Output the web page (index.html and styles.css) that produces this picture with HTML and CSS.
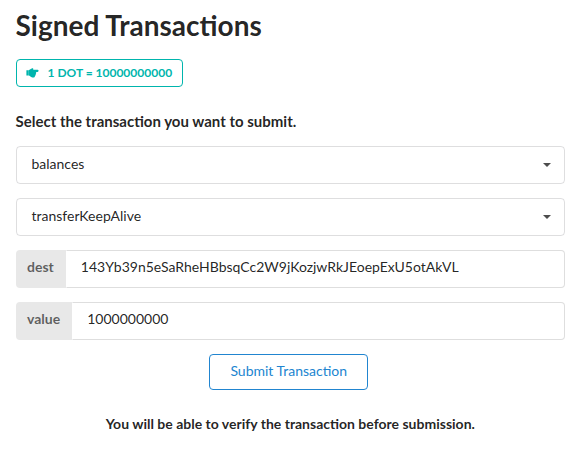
FILE: index.html
```html
<!DOCTYPE html>
<html lang="en">
<head>
<meta charset="utf-8">
<title>Signed Transactions</title>
<link rel="stylesheet" href="styles.css">
</head>
<body>
<main class="page">
  <h1 class="title">Signed Transactions</h1>
  <div class="label">
    <svg class="hand" viewBox="0 0 13 12"><path d="M.4 3.2h2v5.2h-2zM2.6 3.2C4 3 4.7 1.6 6.2 1.3c1-.1 1.3.6 1 1.4h4.4c1.3 0 1.3 2.2 0 2.2H10c.4.5.3 1.1-.1 1.5.2.5.1 1-.4 1.4.1.6-.1 1.1-.6 1.4 0 .9-.7 1.3-1.6 1.3H6.2C4.8 10.2 4 8.7 2.6 8.5z"/></svg>
    <span>1 DOT = 10000000000</span>
  </div>
  <p class="lead">Select the transaction you want to submit.</p>
  <div class="dropdown"><span>balances</span><i class="caret"></i></div>
  <div class="dropdown"><span>transferKeepAlive</span><i class="caret"></i></div>
  <div class="field"><span class="name">dest</span><span class="input">143Yb39n5eSaRheHBbsqCc2W9jKozjwRkJEoepExU5otAkVL</span></div>
  <div class="field"><span class="name">value</span><span class="input">1000000000</span></div>
  <button class="submit" type="button">Submit Transaction</button>
  <p class="note">You will be able to verify the transaction before submission.</p>
</main>
</body>
</html>
```
FILE: styles.css
```css
* { box-sizing: border-box; }
body { margin: 0; background: #fff; color: rgba(0,0,0,.87); font: 14px/18px Lato, "Liberation Sans", sans-serif; }
.page { display: flex; flex-direction: column; padding: 7px 14px 0 15.5px; }
.title { margin: 0; font-size: 28px; line-height: 36px; font-weight: 700; }
.label { display: flex; align-items: center; align-self: flex-start; width: 167px; height: 28px; margin-top: 16px; padding: 0 9px; border: 1px solid #00b5ad; border-radius: 4px; color: #00b5ad; font-size: 12px; font-weight: 700; line-height: 12px; }
.hand { width: 13px; height: 12px; margin-right: 9px; fill: currentColor; }
.lead { margin: 25px 0 16px; font-size: 15px; font-weight: 700; }
.dropdown, .field { display: flex; align-items: center; height: 38px; margin-bottom: 14px; border: 1px solid rgba(34,36,38,.15); border-radius: 4px; }
.dropdown { justify-content: space-between; padding: 0 13px 2px 15px; }
.caret { margin-top: 1px; border: 4px solid transparent; border-top-color: #4d4d4d; border-bottom: 0; }
.field { border: 0; }
.name { display: flex; align-items: center; height: 38px; padding: 0 12px 4px 11.5px; border-radius: 4px 0 0 4px; background: #e8e8e8; color: rgba(0,0,0,.6); font-weight: 700; }
.input { display: flex; align-items: center; flex: 1; height: 38px; padding: 0 14px 4px; border: 1px solid rgba(34,36,38,.15); border-left-color: transparent; border-radius: 0 4px 4px 0; }
.submit { align-self: center; width: 159px; height: 36px; margin-right: 3px; padding: 0 0 2px; border: 1px solid #2185d0; border-radius: 4px; background: #fff; color: #2185d0; font: 14px/14px Lato, "Liberation Sans", sans-serif; }
.note { margin: 25px 0 0; text-align: center; font-weight: 700; }
```
